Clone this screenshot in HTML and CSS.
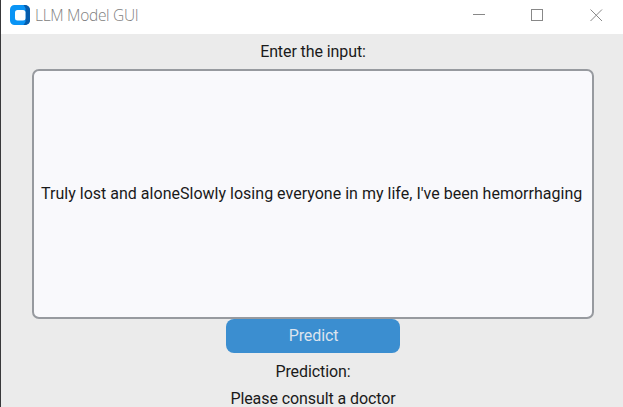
FILE: index.html
```html
<!DOCTYPE html>
<html lang="en">
<head>
<meta charset="utf-8">
<title>LLM Model GUI</title>
<link rel="stylesheet" href="styles.css">
</head>
<body>
<div class="window">
  <header class="titlebar">
    <svg class="logo" width="20" height="20" viewBox="0 0 20 20"><path d="M4.500 0H16L20 4V16L16 20H4.500A4.500 4.500 0 0 1 0 15.500V4.500A4.500 4.500 0 0 1 4.500 0Z" fill="#0a94f5"/><path d="M13.500 0H16Q20 1 20 5V15.500Q20 19 16 20H13.500L15.500 17V3Z" fill="#075cab"/><rect x="5" y="5" width="10.500" height="10.500" rx="2.500" fill="#fff"/></svg>
    <h1 class="title">LLM Model GUI</h1>
    <div class="controls">
      <svg width="13" height="13" viewBox="0 0 13 13"><path d="M1 5.500H13"/></svg>
      <svg width="13" height="13" viewBox="0 0 13 13"><rect x=".5" y=".5" width="11" height="11"/></svg>
      <svg width="13" height="13" viewBox="0 0 13 13"><path d="M.5.5l11.500 11.500M12 .5L.5 12"/></svg>
    </div>
  </header>
  <main class="content">
    <label class="label" for="entry">Enter the input:</label>
    <div class="entry" id="entry">Truly lost and aloneSlowly losing everyone in my life, I've been hemorrhaging</div>
    <button class="predict">Predict</button>
    <p class="label result-label">Prediction:</p>
    <p class="label result">Please consult a doctor</p>
  </main>
</div>
</body>
</html>
```
FILE: styles.css
```css
* { box-sizing: border-box; }
body { margin: 0; overflow: hidden; font-family: Roboto, sans-serif; }
.window { width: 623px; height: 407px; border-left: 1px solid #38383a; background: #ebebeb; overflow: hidden; }
.titlebar { display: flex; align-items: center; height: 34px; background: #fff; padding: 0 20px 4px 9px; }
.logo { margin-right: 5px; }
.title { margin: 0; font: 300 15.5px "Open Sans", sans-serif; letter-spacing: -0.3px; color: #808080; }
.controls { display: flex; gap: 46px; margin-left: auto; fill: none; stroke: #888; }
.content { display: flex; flex-direction: column; align-items: center; padding: 4px 0 0 2px; }
.label { margin: 0; height: 27px; line-height: 27px; font-size: 16px; letter-spacing: -0.09px; color: #1a1a1a; white-space: nowrap; }
.entry { width: 562px; height: 250px; margin-top: 4px; border: 2px solid #979a9f; border-radius: 7px; background: #f9f9fc; display: flex; align-items: center; padding: 0 7px 2px; font-size: 16px; letter-spacing: 0.015px; white-space: nowrap; overflow: hidden; color: #1a1a1a; }
.predict { width: 174px; height: 34px; padding: 0 0 2px 1px; border: 0; border-radius: 8px; background: #3b8ed0; color: #dce4ee; font: 16px Roboto, sans-serif; letter-spacing: -0.09px; }
.result-label { margin-top: 5px; }
```
